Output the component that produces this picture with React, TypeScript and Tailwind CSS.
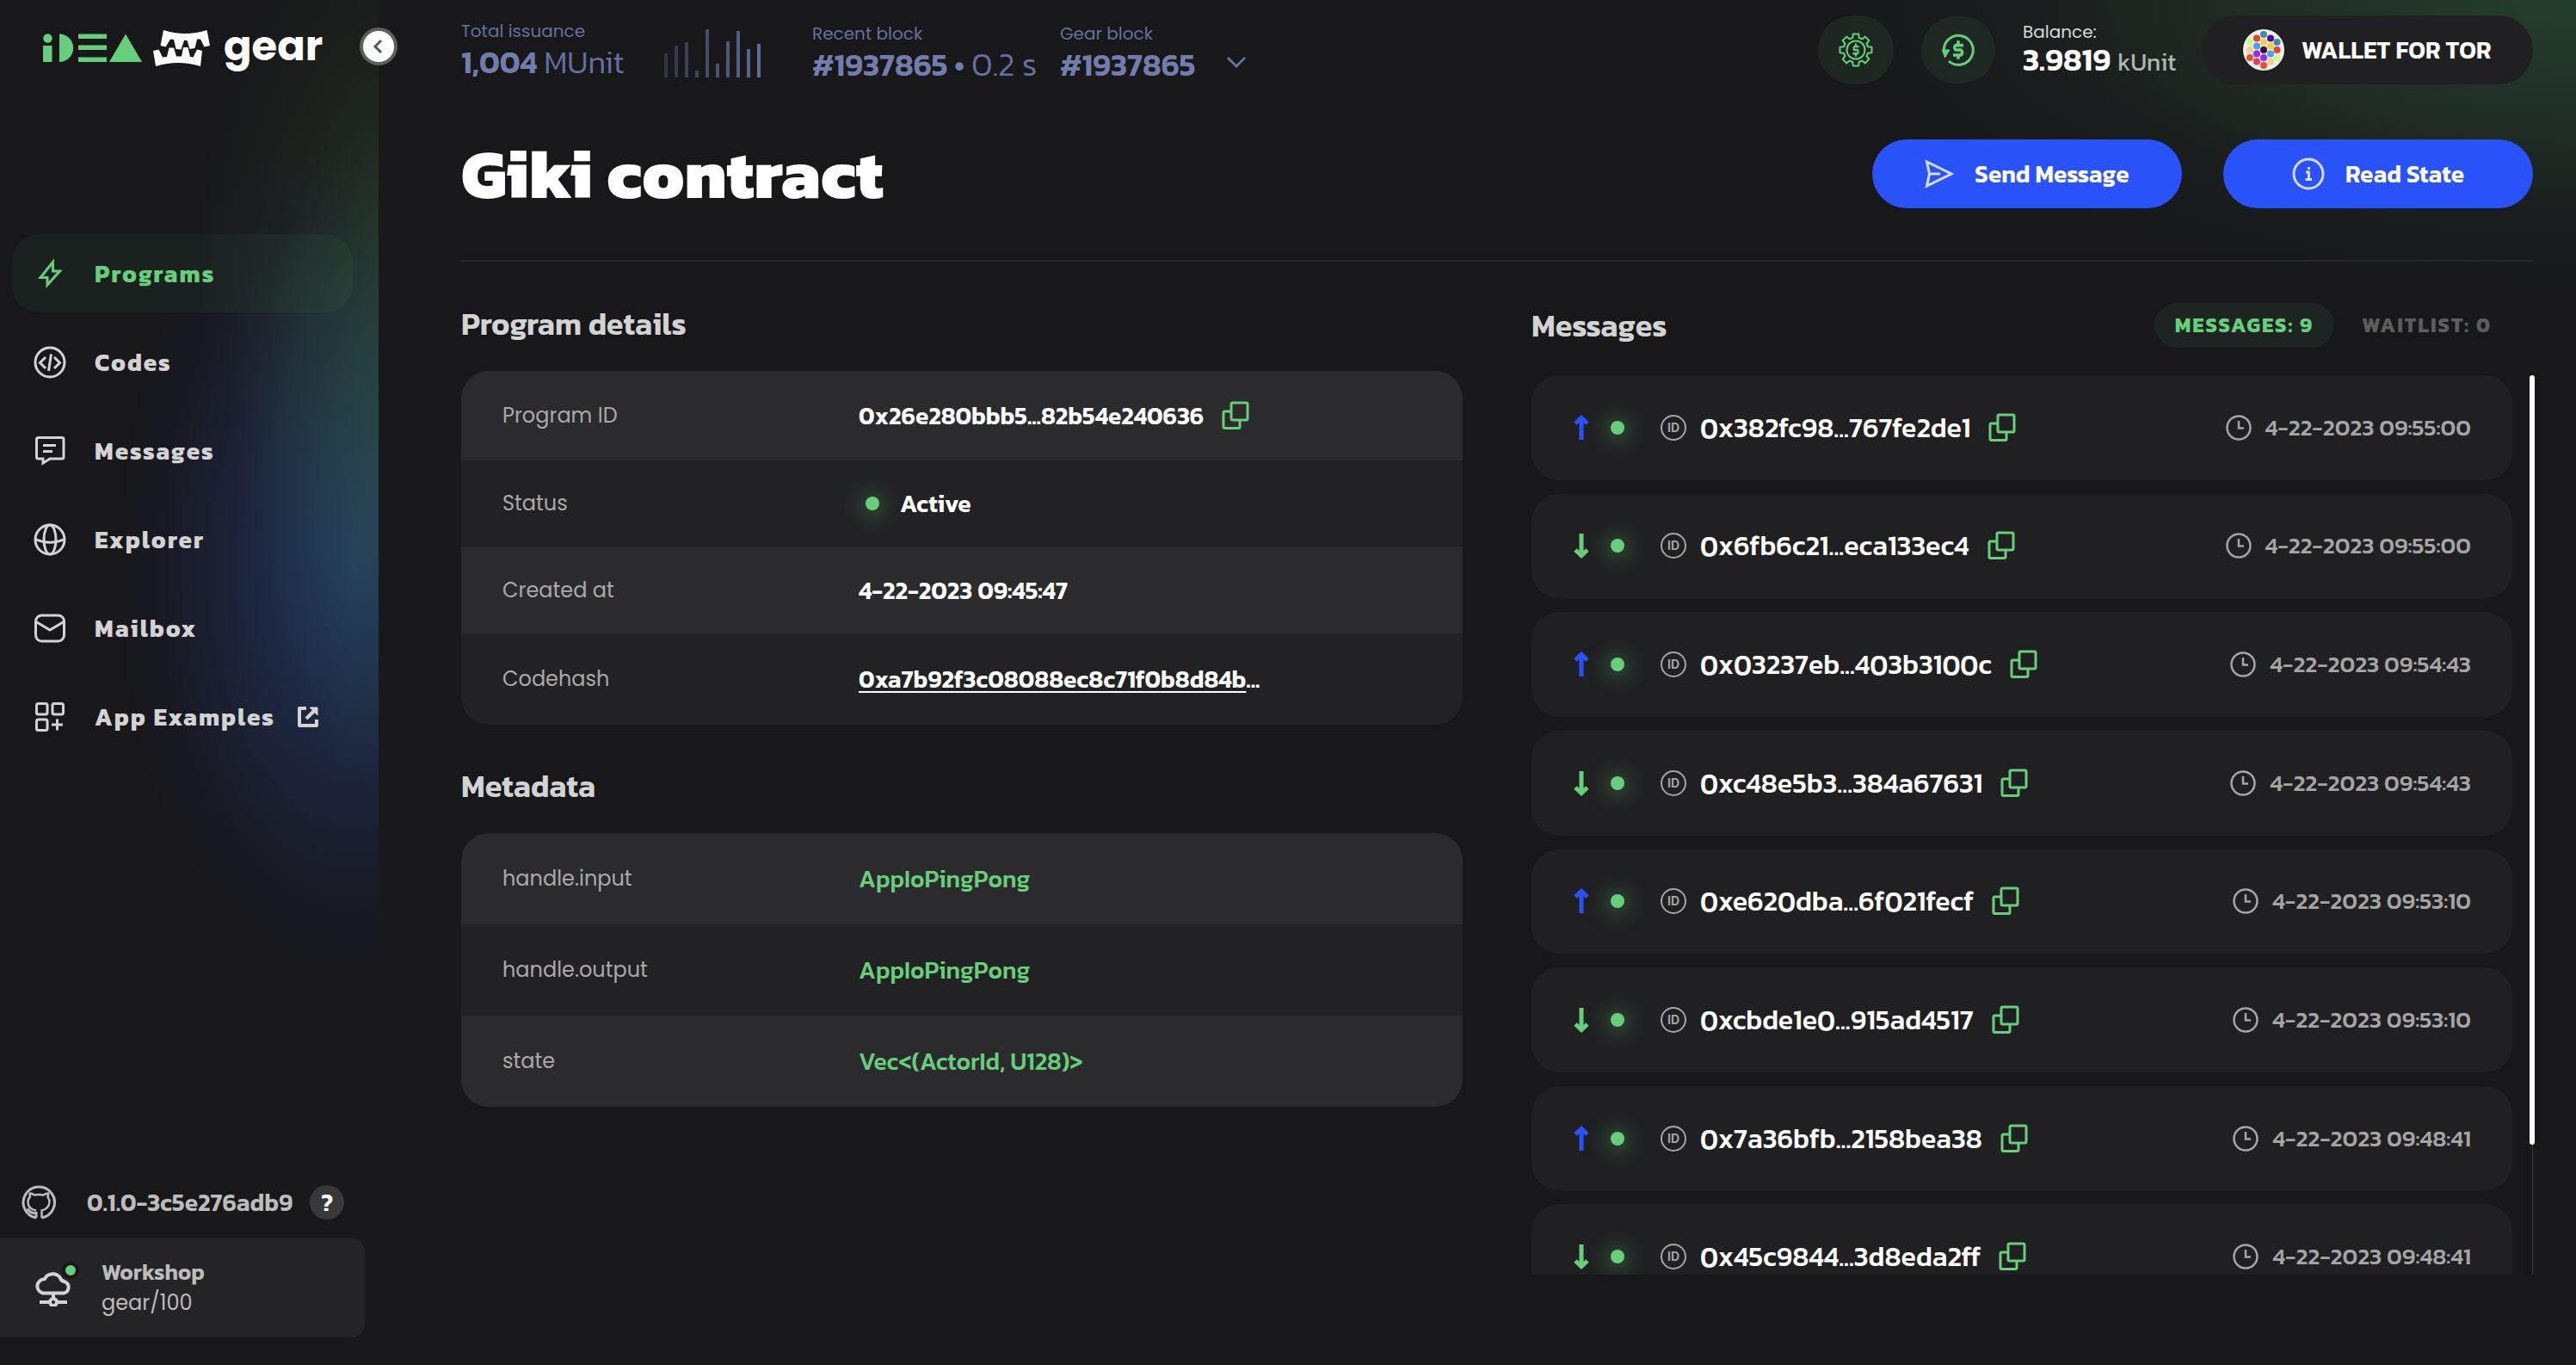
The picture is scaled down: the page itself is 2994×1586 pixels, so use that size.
import type { ReactNode } from "react";

const kanit = "font-['Kanit','Noto_Sans',sans-serif]";

type IconProps = { className?: string };

/* ---------- logo ---------- */

function IdeaMark() {
  return (
    <svg viewBox="0 0 116 34" className="h-[34px] w-[116px] fill-[#67cf7b]" aria-label="idea" role="img">
      <circle cx="5.5" cy="5.5" r="5.2" />
      <rect x="0" y="14" width="10.5" height="19" />
      <path d="M19 .5a16.2 16.2 0 0 1 0 32.400z" />
      <rect x="41" y="0.500" width="33" height="5.500" />
      <rect x="41" y="13.500" width="33" height="5.500" />
      <rect x="41" y="27.500" width="33" height="5.500" />
      <path d="M96 .5 115 33H77z" />
    </svg>
  );
}

function TeethMark() {
  return (
    <svg viewBox="0 0 66 43" className="h-[43px] w-[66px] fill-white" aria-hidden="true">
      <path d="M12 0Q37 8 62.500 0L66 18 59.500 19.500 55 10.500 51 10.500 48.500 21 42.500 22 39.500 12H36L32.500 22.500 26.500 22 24 11 20 10.500 14.500 19.500 8.500 18z" />
      <path d="M0 24 6.500 22.500 11 31.500 16 31 18.500 20.500 24 20.500 27 30.500 33 30.500 35 20 40.500 20 43 31 46.500 31.500 51 22.500 57 24 55 42Q29 34 3 42z" />
    </svg>
  );
}

/* ---------- icons ---------- */

function Stroke({ className = "", size, width = 2, children }: IconProps & { size: number; width?: number; children: ReactNode }) {
  return (
    <svg
      viewBox={`0 0 ${size} ${size}`}
      width={size}
      height={size}
      fill="none"
      stroke="currentColor"
      strokeWidth={width}
      className={`shrink-0 ${className}`}
      aria-hidden="true"
    >
      {children}
    </svg>
  );
}

const BoltIcon = () => (
  <Stroke size={40} width={3}>
    <path d="M23.500 6.500 9 24.500H17V33L31.500 17H23.500z" strokeLinejoin="miter" />
  </Stroke>
);
const CodeIcon = () => (
  <Stroke size={40} width={3}>
    <circle cx="20" cy="20" r="17" />
    <path d="M15 14 8.500 20.500 15 27M25 14l6.500 6.500L25 27M21.500 10.500 18.500 30" />
  </Stroke>
);
const ChatIcon = () => (
  <Stroke size={40} width={3}>
    <path d="M6 4.500H34a2 2 0 0 1 2 2V27a2 2 0 0 1-2 2H20L12 34V29H6.500a2 2 0 0 1-2-2V6.500a2 2 0 0 1 2-2zM12 13.500H27M12 20.500H23" />
  </Stroke>
);
const GlobeIcon = () => (
  <Stroke size={40} width={3}>
    <circle cx="20" cy="20" r="17" />
    <ellipse cx="20" cy="20" rx="7" ry="17" />
    <path d="M3 19.500Q20 27 37 19.500" />
  </Stroke>
);
const MailIcon = () => (
  <Stroke size={40} width={3}>
    <rect x="3.500" y="5" width="33" height="30" rx="7" />
    <path d="M4 12.500 20 22 36 12.500" />
  </Stroke>
);
const AppsIcon = () => (
  <Stroke size={40} width={3}>
    <rect x="4.500" y="4.500" width="12.500" height="12.500" rx="2" />
    <rect x="23" y="4.500" width="12.500" height="12.500" rx="2" />
    <rect x="4.500" y="23" width="12.500" height="12.500" rx="2" />
    <path d="M28.500 22.500V35.500M22 29H35" />
  </Stroke>
);
const ExternalIcon = () => (
  <Stroke size={28} width={4}>
    <path d="M12 4H4V24H24V17" strokeLinejoin="round" />
    <path d="M12 16 23 5" />
    <path d="M16 3H25V12z" fill="currentColor" strokeWidth="1" />
  </Stroke>
);
const GithubIcon = () => (
  <Stroke size={40} width={3}>
    <path d="M17 38A18.200 18.200 0 1 1 23.500 38" />
    <path d="M17 38V32.500C11 33 9.500 30.500 6.500 27.500" />
    <path d="M17 29.500C11 28.500 7.500 25 7.500 19.500Q7.500 16 10 13.500 9 11 10 9.500 13 10 15 11.500 20 10.500 25.500 11.500 28 10 31 9.500 31.500 12 30.500 14 33 17 32.500 20C32 25 29 28 23.500 29.500V38" strokeWidth="2.500" />
  </Stroke>
);
const NodeIcon = () => (
  <Stroke size={44} width={4}>
    <path d="M9.500 28.500H34a7 7 0 0 0 2-13C33 15 31 14 30 11 26 4 15 5 12 12 2 13 0 25 9.500 28.500z" />
    <path d="M22 28V35M6 39H38" />
    <circle cx="22" cy="39" r="4" fill="#242426" />
  </Stroke>
);
const CopyIcon = () => (
  <Stroke size={34} width={3} className="text-[#67cf7b]">
    <rect x="12" y="2" width="19" height="20" rx="1.500" />
    <path d="M11 12H4.500A1.500 1.500 0 0 0 3 13.500V30a1.500 1.500 0 0 0 1.500 1.500H20.500a1.500 1.500 0 0 0 1.500-1.500V23" />
  </Stroke>
);
const ClockIcon = () => (
  <Stroke size={30} width={2.5}>
    <circle cx="15" cy="15" r="13.500" />
    <path d="M15 7V15.500H21" />
  </Stroke>
);
const SendIcon = () => (
  <Stroke size={34} width={3} className="text-[#d5dcfd]">
    <path d="M2.500 3 31 17 2.500 31 5.500 17z" />
    <path d="M5 17H18" />
  </Stroke>
);
const InfoIcon = () => (
  <Stroke size={38} width={3} className="text-[#d5dcfd]">
    <circle cx="19" cy="19" r="17" />
    <path d="M16 17H19.500V25M15.500 25.500H23" />
    <path d="M18 12.500H21" />
  </Stroke>
);
const ChevronDown = () => (
  <Stroke size={24} width={3} className="text-[#6570a0]">
    <path d="M2 7 12 17 22 7" />
  </Stroke>
);

const cog = Array.from({ length: 8 }, (_, i) => {
  const at = (deg: number, r: number) => {
    const a = ((i * 45 + deg - 90) * Math.PI) / 180;
    return `${(21 + r * Math.cos(a)).toFixed(2)} ${(21 + r * Math.sin(a)).toFixed(2)}`;
  };
  return `${at(-15, 14.5)} ${at(-10, 18.800)} ${at(10, 18.800)} ${at(15, 14.5)}`;
}).join(" ");

const dollar = "M5 -4.500H-2.500A3 3 0 0 0 -2.500 0H2.500A3 3 0 0 1 2.500 5H-5M0 -9V-4M0 5V9";

const CogDollarIcon = () => (
  <Stroke size={42} width={2} className="text-[#67cf7b]">
    <polygon points={cog} strokeLinejoin="round" />
    <circle cx="21" cy="21" r="10.500" />
    <g transform="translate(21 21) scale(.72 .85)">
      <path d={dollar} strokeWidth="2.800" />
    </g>
  </Stroke>
);
const RefundIcon = () => (
  <Stroke size={42} width={3} className="text-[#67cf7b]">
    <path d="M4.500 24A17 17 0 1 1 10 34" />
    <path d="M2.500 21H11L5.500 30z" fill="currentColor" strokeWidth="1" />
    <g transform="translate(21 21) scale(1.200)">
      <path d={dollar} />
    </g>
  </Stroke>
);

const ArrowIcon = ({ up }: { up: boolean }) => (
  <svg viewBox="0 0 20 30" width="20" height="30" className={up ? "shrink-0 text-[#2a52f9]" : "shrink-0 rotate-180 text-[#67cf7b]"} aria-label={up ? "outgoing" : "incoming"} role="img">
    <path d="M10 29V4M3 10 10 3.500 17 10" fill="none" stroke="currentColor" strokeWidth="5" />
    <path d="M10 1 17 9H3z" fill="currentColor" />
  </svg>
);

const dots: [number, number, string][] = [
  [24, 6, "#3f8ba8"], [16, 10.500, "#e1432f"], [32, 10.500, "#4410a5"], [8, 15, "#c9fa8d"], [24, 15, "#eed04c"], [39.500, 15, "#3f8ba8"],
  [16, 19.500, "#4aa0ec"], [32, 19.500, "#eed04c"], [8, 24, "#f3cf8e"], [24, 24, "#3a0a48"], [39.500, 24, "#e1432f"],
  [16, 28.500, "#8f2cf0"], [32, 28.500, "#4aa0ec"], [8, 33, "#e5532f"], [24, 33, "#8f2cf0"], [39.500, 33, "#c9fa8d"],
  [16, 37.500, "#e1385f"], [32, 37.500, "#f3cf8e"], [24, 42, "#e5532f"],
];

const Avatar = () => (
  <svg viewBox="0 0 48 48" className="size-12 shrink-0" aria-hidden="true">
    <circle cx="24" cy="24" r="24" fill="#eeeeee" />
    {dots.map(([x, y, c]) => (
      <circle key={`${x}-${y}`} cx={x} cy={y} r="4" fill={c} />
    ))}
  </svg>
);

/* ---------- sidebar ---------- */

const nav = [
  { label: "Programs", icon: <BoltIcon /> },
  { label: "Codes", icon: <CodeIcon /> },
  { label: "Messages", icon: <ChatIcon /> },
  { label: "Explorer", icon: <GlobeIcon /> },
  { label: "Mailbox", icon: <MailIcon /> },
  { label: "App Examples", icon: <AppsIcon />, external: true },
];

function Sidebar() {
  return (
    <aside className="relative flex w-[440px] shrink-0 flex-col">
      <div className="absolute inset-0 -z-10 bg-[radial-gradient(ellipse_260px_420px_at_490px_300px,rgba(70,120,60,0.24),transparent),radial-gradient(ellipse_200px_420px_at_490px_520px,rgba(52,130,90,0.3),transparent),radial-gradient(ellipse_290px_520px_at_410px_660px,rgba(44,80,160,0.5),rgba(40,70,145,0.28)_45%,rgba(26,28,90,0.12)_78%,transparent)]" />
      <div className="flex h-[112px] items-center pl-[50px]">
        <IdeaMark />
        <div className="ml-3 flex items-center gap-4">
          <TeethMark />
          <span className="pb-1 text-[48px] leading-[52px] font-bold text-white">gear</span>
        </div>
      </div>
      <button type="button" aria-label="Collapse menu" className="absolute top-8 -right-[22px] z-10 flex size-11 items-center justify-center rounded-full border-4 border-[#5d5f60] bg-white">
        <svg viewBox="0 0 20 20" width="20" height="20" fill="none" stroke="#555a5a" strokeWidth="3" aria-hidden="true">
          <path d="M13 3 6 10l7 7" />
        </svg>
      </button>

      <nav className="mt-[160px] flex flex-col gap-3 pr-[30px] pl-[14px]">
        {nav.map((item, i) => (
          <a
            key={item.label}
            href="#"
            className={`flex h-[91px] items-center rounded-[32px] pl-6 ${kanit} text-[28px] leading-8 font-bold tracking-[2px] ${
              i === 0 ? "bg-[#67cf7b]/5 text-[#67cf7b]" : "text-[#d3d3d3]"
            }`}
          >
            {item.icon}
            <span className="ml-8">{item.label}</span>
            {item.external && (
              <span className="ml-6">
                <ExternalIcon />
              </span>
            )}
          </a>
        ))}
      </nav>

      <div className="mt-auto pb-8 text-[#bcbcbc]">
        <div className="flex h-[82px] items-center pl-[25px]">
          <a href="#" aria-label="GitHub">
            <GithubIcon />
          </a>
          <span className={`ml-9 ${kanit} text-[28px] leading-8 font-semibold`}>0.1.0-3c5e276adb9</span>
          <button type="button" aria-label="Help" className={`ml-5 size-10 rounded-full bg-[#383838] ${kanit} text-[28px] leading-8 font-semibold text-white`}>
            ?
          </button>
        </div>
        <button type="button" className="flex h-[116px] w-[424px] items-center rounded-r-[16px] bg-[#242426] pl-10 text-left">
          <span className="relative text-[#d3d3d3]">
            <NodeIcon />
            <span className="absolute -top-2 -right-2 size-5 rounded-full border-4 border-[#18181a] bg-[#67cf7b]" />
          </span>
          <span className="ml-[34px] flex flex-col">
            <span className={`${kanit} text-[26px] leading-9 font-semibold`}>Workshop</span>
            <span className="text-[24px] leading-9">gear/100</span>
          </span>
        </button>
      </div>
    </aside>
  );
}

/* ---------- header ---------- */

const bars = [
  ["h-[28px]", "bg-[#313445]"],
  ["h-[37px]", "bg-[#363a4d]"],
  ["h-[41px]", "bg-[#3b4056]"],
  ["h-[8px]", "bg-[#40465e]"],
  ["h-[56px]", "bg-[#454c67]"],
  ["h-[16px]", "bg-[#4a526f]"],
  ["h-[42px]", "bg-[#4f5878]"],
  ["h-[54px]", "bg-[#545e81]"],
  ["h-[33px]", "bg-[#5a648a]"],
  ["h-[39px]", "bg-[#606b94]"],
];

function Stat({ label, className, children }: { label: string; className: string; children: ReactNode }) {
  return (
    <div className={`flex flex-col text-[#6570a0] ${className}`}>
      <span className="text-[20px] leading-6">{label}</span>
      <span className={`mt-1 flex h-10 items-baseline gap-2 ${kanit} text-[36px] leading-10 font-light whitespace-nowrap`}>{children}</span>
    </div>
  );
}

const StatValue = ({ children }: { children: ReactNode }) => <span className="font-semibold text-[#727dab]">{children}</span>;

function Header() {
  return (
    <header className="flex items-center pt-[18px]">
      <Stat label="Total issuance" className="w-[190px]">
        <StatValue>1,004</StatValue> MUnit
      </Stat>
      <div className="ml-[46px] flex h-16 items-end gap-2" aria-hidden="true">
        {bars.map(([h, c], i) => (
          <span key={i} className={`w-1 ${h} ${c}`} />
        ))}
      </div>
      <Stat label="Recent block" className="ml-[60px] w-[264px] pt-1.5">
        <StatValue>#1937865 •</StatValue> <span className="text-[38px]">0.2 s</span>
      </Stat>
      <Stat label="Gear block" className="ml-6 pt-1.5">
        <StatValue>#1937865</StatValue>
      </Stat>
      <button type="button" aria-label="More stats" className="mt-7 ml-9">
        <ChevronDown />
      </button>

      <div className="ml-auto flex items-center gap-8">
        <button type="button" aria-label="Gas settings" className="flex h-20 w-[88px] items-center justify-center rounded-[40px] bg-[#67cf7b]/8">
          <CogDollarIcon />
        </button>
        <button type="button" aria-label="Get test balance" className="flex h-[78px] w-[86px] items-center justify-center rounded-[40px] bg-[#67cf7b]/8">
          <RefundIcon />
        </button>
        <div className="flex w-44 flex-col whitespace-nowrap">
          <span className="text-[20px] leading-6 text-[#dadada]">Balance:</span>
          <span className={`flex items-baseline gap-2 ${kanit} text-[36px] leading-10 font-semibold text-white`}>
            3.9819 <span className="text-[28px] font-normal text-[#b0b5b2]">kUnit</span>
          </span>
        </div>
        <button type="button" className={`flex h-20 w-[385px] items-center gap-5 rounded-[40px] bg-[#202022] pl-12 ${kanit} text-[28px] leading-8 font-semibold whitespace-nowrap text-white`}>
          <Avatar />
          WALLET FOR TOR
        </button>
      </div>
    </header>
  );
}

/* ---------- details ---------- */

type Row = { label: string; value: ReactNode; height: string };

function DetailTable({ rows, name }: { rows: Row[]; name: string }) {
  return (
    <section>
      <h2 id={name} className={`${kanit} text-[36px] leading-[48px] font-semibold text-[#d3d3d3]`}>
        {name}
      </h2>
      <div className="mt-[31px] overflow-hidden rounded-[32px]">
        <table className="w-full table-fixed" aria-labelledby={name}>
          <tbody>
            {rows.map((r) => (
              <tr key={r.label} className={`${r.height} odd:bg-[#2b2b2d] even:bg-[#222224]`}>
                <th scope="row" className="w-[462px] pl-12 text-left text-[24px] leading-9 font-normal text-[#aaaaab]">
                  {r.label}
                </th>
                <td className={`${kanit} text-[28px] leading-9`}>{r.value}</td>
              </tr>
            ))}
          </tbody>
        </table>
      </div>
    </section>
  );
}

const Dot = () => <span className="size-4 shrink-0 rounded-full bg-[#67cf7b] shadow-[0_2px_24px_4px_rgba(103,207,123,0.4)]" />;

const program: Row[] = [
  {
    label: "Program ID",
    height: "h-[104px]",
    value: (
      <span className="flex items-center gap-5 font-semibold text-white">
        0x26e280bbb5...82b54e240636
        <button type="button" aria-label="Copy program ID">
          <CopyIcon />
        </button>
      </span>
    ),
  },
  {
    label: "Status",
    height: "h-[100px]",
    value: (
      <span className="flex items-center gap-6 pl-2 font-semibold text-white">
        <Dot />
        Active
      </span>
    ),
  },
  { label: "Created at", height: "h-[101px]", value: <span className="font-semibold text-white">4-22-2023 09:45:47</span> },
  {
    label: "Codehash",
    height: "h-[106px]",
    value: (
      <span className="font-semibold text-white">
        <a href="#" className="underline decoration-2 underline-offset-4">
          0xa7b92f3c08088ec8c71f0b8d84b
        </a>
        ...
      </span>
    ),
  },
];

const typeName = (t: string) => <span className="font-medium text-[#67cf7b]">{t}</span>;

const metadata: Row[] = [
  { label: "handle.input", height: "h-[106px]", value: typeName("AppIoPingPong") },
  { label: "handle.output", height: "h-[106px]", value: typeName("AppIoPingPong") },
  { label: "state", height: "h-[106px]", value: typeName("Vec<(ActorId, U128)>") },
];

/* ---------- messages ---------- */

const messages = [
  { up: true, id: "0x382fc98...767fe2de1", time: "4-22-2023 09:55:00" },
  { up: false, id: "0x6fb6c21...eca133ec4", time: "4-22-2023 09:55:00" },
  { up: true, id: "0x03237eb...403b3100c", time: "4-22-2023 09:54:43" },
  { up: false, id: "0xc48e5b3...384a67631", time: "4-22-2023 09:54:43" },
  { up: true, id: "0xe620dba...6f021fecf", time: "4-22-2023 09:53:10" },
  { up: false, id: "0xcbde1e0...915ad4517", time: "4-22-2023 09:53:10" },
  { up: true, id: "0x7a36bfb...2158bea38", time: "4-22-2023 09:48:41" },
  { up: false, id: "0x45c9844...3d8eda2ff", time: "4-22-2023 09:48:41" },
];

function Messages() {
  return (
    <section>
      <div className="flex items-center">
        <h2 className={`${kanit} text-[36px] leading-[48px] font-semibold text-[#d3d3d3]`}>Messages</h2>
        <div className={`ml-auto flex items-center gap-2 pr-6 ${kanit} text-[24px] leading-8 font-bold tracking-[2px] whitespace-nowrap`}>
          <button type="button" className="h-[52px] rounded-full bg-[#1e2422] px-6 text-[#67cf7b]">
            MESSAGES: 9
          </button>
          <button type="button" className="h-[52px] px-6 text-[#5d5d5e]">
            WAITLIST: 0
          </button>
        </div>
      </div>
      <div className="mt-8 -mr-0.5 flex h-[1045px] overflow-hidden">
        <ul className="grid h-[1085px] flex-1 auto-rows-fr gap-4">
          {messages.map((m) => (
            <li key={m.id} className="flex items-center rounded-[32px] bg-[#202022] px-12">
              <ArrowIcon up={m.up} />
              <span className="ml-6 flex">
                <Dot />
              </span>
              <span className="ml-[42px] flex size-[30px] items-center justify-center rounded-full border-2 border-[#a5a5a6] font-['Inter',sans-serif] text-[14px] leading-4 font-bold text-[#a5a5a6]">
                ID
              </span>
              <a href="#" className={`ml-4 ${kanit} text-[32px] leading-9 font-medium text-white`}>
                {m.id}
              </a>
              <button type="button" aria-label={`Copy ${m.id}`} className="ml-5">
                <CopyIcon />
              </button>
              <span className={`ml-auto flex items-center gap-4 ${kanit} text-[27px] leading-9 font-medium text-[#a5a5a6]`}>
                <ClockIcon />
                {m.time}
              </span>
            </li>
          ))}
        </ul>
        <div className="ml-5 flex w-1.5 flex-col items-center" aria-hidden="true">
          <div className="h-[894px] w-1.5 rounded-full bg-white" />
          <div className="w-px flex-1 bg-[#3a3a3c]" />
        </div>
      </div>
    </section>
  );
}

/* ---------- page ---------- */

const action = `flex h-20 w-[360px] items-center justify-center gap-6 rounded-[40px] bg-[#2a52f9] ${kanit} text-[28px] leading-8 font-semibold text-white`;

export default function App() {
  return (
    <div className="isolate flex min-h-screen bg-[#18181a] font-['Poppins','Inter',sans-serif]">
      <Sidebar />
      <main className="min-w-0 flex-1 bg-[radial-gradient(ellipse_860px_340px_at_100%_0,rgba(70,160,100,0.28),rgba(70,150,90,0.16)_45%,rgba(60,120,80,0.06)_72%,transparent)] pr-[50px] pl-24">
        <Header />
        <div className="mt-16 flex items-center gap-12 border-b-2 border-[#28282b] pb-[60px]">
          <h1 className={`mr-auto ${kanit} text-[80px] leading-[80px] font-extrabold text-white`}>Giki contract</h1>
          <button type="button" className={action}>
            <SendIcon />
            Send Message
          </button>
          <button type="button" className={action}>
            <InfoIcon />
            Read State
          </button>
        </div>
        <div className="mt-12 grid grid-cols-2 gap-20">
          <div className="flex flex-col gap-[47px]">
            <DetailTable name="Program details" rows={program} />
            <DetailTable name="Metadata" rows={metadata} />
          </div>
          <Messages />
        </div>
      </main>
    </div>
  );
}
